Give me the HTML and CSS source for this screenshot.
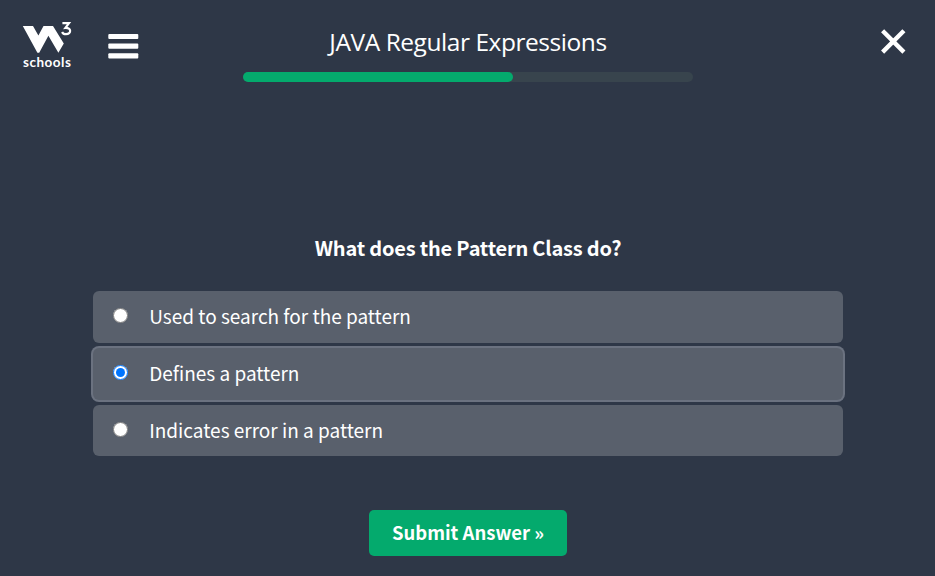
FILE: index.html
```html
<!DOCTYPE html>
<html lang="en">
<head>
<meta charset="utf-8">
<title>JAVA Regular Expressions</title>
<link rel="stylesheet" href="styles.css">
</head>
<body>
<header class="topbar">
  <div class="brand">
    <svg class="mark" width="50" height="34" viewBox="0 0 50 34">
      <path fill="#fff" d="M0.8 6H11L16.4 15.4L21.5 6H31L41.8 23.4L36.4 32.7L26.4 15.8L17.2 32.7H15.4Z"/>
      <path fill="none" stroke="#fff" stroke-width="2.2" d="M40.4 3.2H47L43.4 7.9C49.6 7.5 49.6 14.2 44 14.2C42 14.2 40.7 13.4 40.1 12"/>
    </svg>
    <span class="brand-name">schools</span>
  </div>
  <svg class="menu" width="31" height="26" viewBox="0 0 31 26">
    <g fill="#fff"><rect x="0.3" y="0" width="30" height="5" rx="1"/><rect x="0.3" y="9.5" width="30" height="5.2" rx="1"/><rect x="0.3" y="19.2" width="30" height="5.3" rx="1"/></g>
  </svg>
  <div class="heading">
    <h1 class="title">JAVA Regular Expressions</h1>
    <div class="progress"><div class="progress-fill"></div></div>
  </div>
  <svg class="close" width="26" height="26" viewBox="0 0 26 26"><path d="M2.6 2.8L23.9 24.1M23.9 2.8L2.6 24.1" stroke="#fff" stroke-width="4.4"/></svg>
</header>
<main class="quiz">
  <h2 class="question">What does the Pattern Class do?</h2>
  <div class="options">
    <label class="option"><input class="radio" type="radio" name="a"><span class="label">Used to search for the pattern</span></label>
    <label class="option selected"><input class="radio" type="radio" name="a" checked><span class="label">Defines a pattern</span></label>
    <label class="option last"><input class="radio" type="radio" name="a"><span class="label">Indicates error in a pattern</span></label>
  </div>
  <button class="submit">Submit Answer »</button>
</main>
</body>
</html>
```
FILE: styles.css
```css
* { box-sizing: border-box; }
body { margin: 0; height: 576px; overflow: hidden; background: #2e3747; color: #fff; font-family: "Noto Sans CJK SC", "Open Sans", sans-serif; }
.topbar { display: grid; grid-template-columns: 86px 135px 450px 1fr 26px; padding: 20px 29px 0 22px; height: 82px; }
.brand { display: flex; flex-direction: column; }
.mark { display: block; }
.brand-name { padding-left: 1px; font: 700 13.5px/16px "Lato", sans-serif; letter-spacing: 0.5px; }
.menu { margin-top: 14px; }
.heading { display: flex; flex-direction: column; align-items: center; }
.title { margin: 5px 0 0; font: 400 24.5px/34px "Open Sans", sans-serif; letter-spacing: -0.45px; white-space: nowrap; }
.progress { width: 450px; height: 10px; margin-top: 13px; border-radius: 5px; background: #38444d; }
.progress-fill { width: 60%; height: 10px; border-radius: 5px; background: #04aa6d; }
.close { grid-column: 5; margin-top: 8px; }
.quiz { display: flex; flex-direction: column; align-items: center; padding-top: 150px; }
.question { margin: 0; height: 32px; font-size: 20px; line-height: 32px; font-weight: 700; letter-spacing: -0.2px; padding-left: 1px; white-space: nowrap; }
.options { display: flex; flex-direction: column; gap: 5px; width: 750px; margin-top: 27px; }
.option { display: flex; height: 52px; padding-left: 20px; border-radius: 6px; background: #59606c; }
.option.selected { box-shadow: 0 0 0 2px #6b7280; }
.option.last { height: 51px; }
.radio { flex: none; width: 15px; height: 15px; margin: 17px 21.7px 0 0; }
.label { font-size: 19px; line-height: 50px; white-space: nowrap; }
.submit { width: 198px; height: 46px; margin-top: 54px; padding: 0 0 2px 1px; border: 0; border-radius: 5px; background: #04aa6d; color: #fff; font: 700 18.5px/44px "Noto Sans CJK SC", sans-serif; }
```
